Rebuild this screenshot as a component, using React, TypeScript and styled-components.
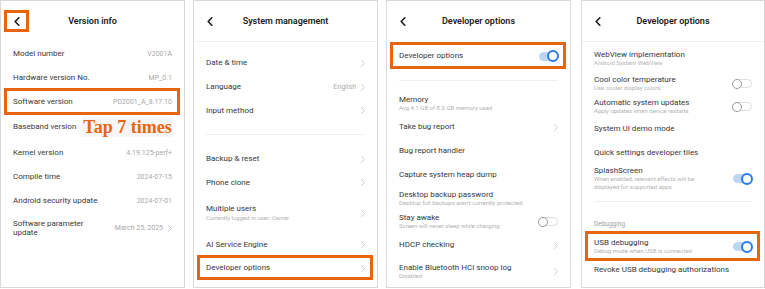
import React from 'react';
import styled, { createGlobalStyle, css } from 'styled-components';

const ORANGE = '#e8650f';

const GlobalStyle = createGlobalStyle`
  html, body {
    margin: 0;
    padding: 0;
    background: #ffffff;
  }
  body {
    font-family: Roboto, "Noto Sans", "Liberation Sans", sans-serif;
    color: #333;
  }
`;

const Strip = styled.div`
  display: flex;
  gap: 8px;
  width: 765px;
  height: 289px;
`;

const Panel = styled.div<{ $width: number; $shift?: number }>`
  width: ${p => p.$width}px;
  margin-left: ${p => p.$shift || 0}px;
  height: 288px;
  box-sizing: border-box;
  border: 1px solid #d9d9d9;
  background: #fff;
  overflow: hidden;
  display: flex;
  flex-direction: column;
  flex-shrink: 0;
`;

const Header = styled.div<{ $line?: boolean }>`
  height: 41px;
  flex-shrink: 0;
  box-sizing: border-box;
  display: grid;
  grid-template-columns: 36px 1fr 36px;
  align-items: center;
  border-bottom: 1px solid ${p => (p.$line ? '#f1f1f1' : 'transparent')};
`;

const BackButton = styled.div<{ $mark?: boolean }>`
  width: 25px;
  height: 22px;
  margin-left: 3px;
  box-sizing: border-box;
  display: flex;
  align-items: center;
  justify-content: center;
  border: 3px solid ${p => (p.$mark ? ORANGE : 'transparent')};
  svg {
    width: 6px;
    height: 9px;
  }
`;

const Title = styled.div`
  text-align: center;
  font-size: 9px;
  font-weight: 600;
  color: #1b1b1b;
  white-space: nowrap;
`;

const List = styled.div<{ $top: number }>`
  display: flex;
  flex-direction: column;
  padding-top: ${p => p.$top}px;
`;

const Row = styled.div<{ $h: number; $mark?: boolean }>`
  position: relative;
  height: ${p => p.$h}px;
  flex-shrink: 0;
  padding: 0 12px;
  display: flex;
  align-items: center;
  justify-content: space-between;
  gap: 6px;
  ${p =>
    p.$mark &&
    css`
      &::after {
        content: '';
        position: absolute;
        top: -2px;
        bottom: -1px;
        left: 3px;
        right: 4px;
        border: 3px solid ${ORANGE};
        pointer-events: none;
      }
    `}
`;

const Texts = styled.div`
  display: flex;
  flex-direction: column;
  flex-shrink: 0;
`;

const RowTitle = styled.div`
  font-size: 8px;
  line-height: 9.5px;
  color: #383838;
  white-space: pre;
`;

const RowSub = styled.div`
  font-size: 6px;
  line-height: 8px;
  color: #b3b3b3;
  white-space: pre;
`;

const Trailing = styled.div`
  display: flex;
  align-items: center;
  gap: 5px;
  flex-shrink: 0;
`;

const Value = styled.span`
  font-size: 7px;
  color: #a8a8a8;
  white-space: nowrap;
`;

const TapNote = styled.span`
  font-family: "Liberation Serif", "Times New Roman", serif;
  font-weight: 700;
  font-size: 18px;
  line-height: 20px;
  color: ${ORANGE};
  background: #f6f6f6;
  padding: 0 1px;
  white-space: nowrap;
`;

const Chevron = styled.svg`
  width: 4px;
  height: 7px;
  flex-shrink: 0;
`;

const Track = styled.div<{ $on: boolean }>`
  position: relative;
  width: 19px;
  height: 9px;
  box-sizing: border-box;
  border-radius: 5px;
  background: ${p => (p.$on ? '#bcd7f6' : '#ffffff')};
  border: 1px solid ${p => (p.$on ? '#bcd7f6' : '#dedede')};
  flex-shrink: 0;
`;

const Knob = styled.div<{ $on: boolean }>`
  position: absolute;
  top: 50%;
  transform: translateY(-50%);
  box-sizing: border-box;
  border-radius: 50%;
  background: #fff;
  ${p =>
    p.$on
      ? css`
          right: -2px;
          width: 12px;
          height: 12px;
          border: 2px solid #2a7be6;
        `
      : css`
          left: -2px;
          width: 10px;
          height: 10px;
          border: 1px solid #9b9b9b;
        `}
`;

const Divider = styled.div<{ $above: number; $below: number }>`
  flex-shrink: 0;
  height: 1px;
  margin: ${p => p.$above}px 12px ${p => p.$below}px;
  background: #efefef;
`;

const SectionLabel = styled.div<{ $h: number }>`
  height: ${p => p.$h}px;
  flex-shrink: 0;
  padding: 0 12px;
  display: flex;
  align-items: center;
  font-size: 6.5px;
  color: #9d9d9d;
`;

type Item =
  | {
      kind: 'row';
      title: string;
      sub?: string;
      value?: string;
      chevron?: boolean;
      toggle?: 'on' | 'off';
      tap?: boolean;
      mark?: boolean;
      h: number;
    }
  | { kind: 'divider'; above: number; below: number }
  | { kind: 'label'; text: string; h: number };

type Screen = {
  title: string;
  markBack?: boolean;
  headerLine?: boolean;
  top: number;
  width: number;
  shift?: number;
  items: Item[];
};

const screens: Screen[] = [
  {
    title: 'Version info',
    markBack: true,
    top: 0,
    width: 185,
    items: [
      { kind: 'row', title: 'Model number', value: 'V2001A', h: 24 },
      { kind: 'row', title: 'Hardware version No.', value: 'MP_0.1', h: 24 },
      { kind: 'row', title: 'Software version', value: 'PD2001_A_8.17.10', h: 24, mark: true },
      { kind: 'row', title: 'Baseband version', tap: true, h: 26 },
      { kind: 'row', title: 'Kernel version', value: '4.19.125-perf+', h: 25 },
      { kind: 'row', title: 'Compile time', value: '2024-07-15', h: 24 },
      { kind: 'row', title: 'Android security update', value: '2024-07-01', h: 23 },
      { kind: 'row', title: 'Software parameter\nupdate', value: 'March 25, 2025', chevron: true, h: 32 },
    ],
  },
  {
    title: 'System management',
    headerLine: true,
    top: 9,
    width: 185,
    items: [
      { kind: 'row', title: 'Date & time', chevron: true, h: 24 },
      { kind: 'row', title: 'Language', value: 'English', chevron: true, h: 24 },
      { kind: 'row', title: 'Input method', chevron: true, h: 23 },
      { kind: 'divider', above: 12, below: 12 },
      { kind: 'row', title: 'Backup & reset', chevron: true, h: 24 },
      { kind: 'row', title: 'Phone clone', chevron: true, h: 23 },
      { kind: 'row', title: 'Multiple users', sub: 'Currently logged in user: Owner', chevron: true, h: 38 },
      { kind: 'row', title: 'AI Service Engine', chevron: true, h: 25 },
      { kind: 'row', title: 'Developer options', chevron: true, h: 22, mark: true },
    ],
  },
  {
    title: 'Developer options',
    top: 2,
    width: 185,
    items: [
      { kind: 'row', title: 'Developer options', toggle: 'on', h: 24, mark: true },
      { kind: 'divider', above: 12, below: 11 },
      { kind: 'row', title: 'Memory', sub: 'Avg 4.1 GB of 8.0 GB memory used', h: 23 },
      { kind: 'row', title: 'Take bug report', chevron: true, h: 24 },
      { kind: 'row', title: 'Bug report handler', h: 24 },
      { kind: 'row', title: 'Capture system heap dump', h: 24 },
      { kind: 'row', title: 'Desktop backup password', sub: "Desktop full backups aren't currently protected", h: 23 },
      { kind: 'row', title: 'Stay awake', sub: 'Screen will never sleep while charging', toggle: 'off', h: 23 },
      { kind: 'row', title: 'HDCP checking', chevron: true, h: 24 },
      { kind: 'row', title: 'Enable Bluetooth HCI snoop log', sub: 'Disabled', chevron: true, h: 29 },
      { kind: 'row', title: 'OEM unlocking', toggle: 'off', h: 12 },
    ],
  },
  {
    title: 'Developer options',
    headerLine: true,
    top: 4,
    width: 184,
    shift: 2,
    items: [
      { kind: 'row', title: 'WebView implementation', sub: 'Android System WebView', h: 25 },
      { kind: 'row', title: 'Cool color temperature', sub: 'Use cooler display colors', toggle: 'off', h: 25 },
      { kind: 'row', title: 'Automatic system updates', sub: 'Apply updates when device restarts', toggle: 'off', h: 21 },
      { kind: 'row', title: 'System UI demo mode', h: 24 },
      { kind: 'row', title: 'Quick settings developer tiles', h: 24 },
      {
        kind: 'row',
        title: 'SplashScreen',
        sub: 'When enabled, relevant effects will be\ndisplayed for supported apps',
        toggle: 'on',
        h: 27,
      },
      { kind: 'divider', above: 9, below: 13 },
      { kind: 'label', text: 'Debugging', h: 18 },
      { kind: 'row', title: 'USB debugging', sub: 'Debug mode when USB is connected', toggle: 'on', h: 27, mark: true },
      { kind: 'row', title: 'Revoke USB debugging authorizations', h: 20 },
    ],
  },
];

const BackIcon = () => (
  <svg viewBox="0 0 6 9" fill="none">
    <path d="M4.8 0.8 L1.2 4.5 L4.8 8.2" stroke="#1b1b1b" strokeWidth="1.6" strokeLinecap="round" strokeLinejoin="round" />
  </svg>
);

const ChevronRight = () => (
  <Chevron viewBox="0 0 4 7" fill="none">
    <path d="M0.5 0.5 L3.5 3.5 L0.5 6.5" stroke="#bdbdbd" strokeWidth="0.8" strokeLinecap="round" strokeLinejoin="round" />
  </Chevron>
);

const Toggle: React.FC<{ on: boolean }> = ({ on }) => (
  <Track $on={on}>
    <Knob $on={on} />
  </Track>
);

const ItemView: React.FC<{ item: Item }> = ({ item }) => {
  if (item.kind === 'divider') return <Divider $above={item.above} $below={item.below} />;
  if (item.kind === 'label') return <SectionLabel $h={item.h}>{item.text}</SectionLabel>;
  return (
    <Row $h={item.h} $mark={item.mark}>
      <Texts>
        <RowTitle>{item.title}</RowTitle>
        {item.sub && <RowSub>{item.sub}</RowSub>}
      </Texts>
      <Trailing>
        {item.tap && <TapNote>Tap 7 times</TapNote>}
        {item.value && <Value>{item.value}</Value>}
        {item.chevron && <ChevronRight />}
        {item.toggle && <Toggle on={item.toggle === 'on'} />}
      </Trailing>
    </Row>
  );
};

const App: React.FC = () => (
  <>
    <GlobalStyle />
    <Strip>
      {screens.map((screen, i) => (
        <Panel key={i} $width={screen.width} $shift={screen.shift}>
          <Header $line={screen.headerLine}>
            <BackButton $mark={screen.markBack}>
              <BackIcon />
            </BackButton>
            <Title>{screen.title}</Title>
            <span />
          </Header>
          <List $top={screen.top}>
            {screen.items.map((item, j) => (
              <ItemView key={j} item={item} />
            ))}
          </List>
        </Panel>
      ))}
    </Strip>
  </>
);

export default App;
